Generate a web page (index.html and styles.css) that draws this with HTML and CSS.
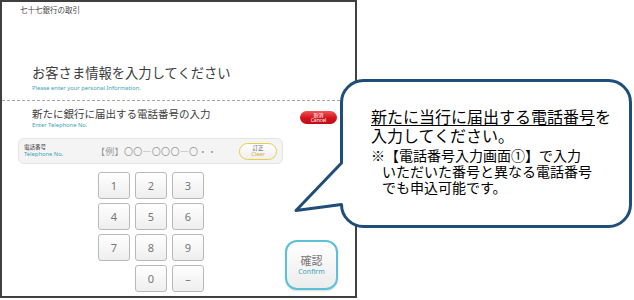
FILE: index.html
```html
<!DOCTYPE html>
<html lang="ja">
<head>
<meta charset="UTF-8">
<meta name="viewport" content="width=device-width, initial-scale=1.0">
<title>お客さま情報の入力</title>
<link rel="stylesheet" href="styles.css">
</head>
<body>
<div class="page">
    <div class="screen">
        <div class="bank-name">七十七銀行の取引</div>
        <div class="title-block">
            <div class="title">お客さま情報を入力してください</div>
            <div class="title-en">Please enter your personal Information.</div>
        </div>
        <div class="section">
            <div class="section-head">
                <div>
                    <div class="heading">新たに銀行に届出する電話番号の入力</div>
                    <div class="heading-en">Enter Telephone No.</div>
                </div>
                <div class="cancel-btn">
                    <span class="btn-jp">取消</span>
                    <span class="btn-en">Cancel</span>
                </div>
            </div>
            <div class="input-bar">
                <div class="input-label">
                    <span class="label-jp">電話番号</span>
                    <span class="label-en">Telephone No.</span>
                </div>
                <div class="input-example">【例】〇〇—〇〇〇—〇・・</div>
                <div class="clear-btn">
                    <span class="btn-jp">訂正</span>
                    <span class="btn-en">Clear</span>
                </div>
            </div>
            <div class="keypad-row">
                <div class="keypad">
                    <div class="key">1</div>
                    <div class="key">2</div>
                    <div class="key">3</div>
                    <div class="key">4</div>
                    <div class="key">5</div>
                    <div class="key">6</div>
                    <div class="key">7</div>
                    <div class="key">8</div>
                    <div class="key">9</div>
                    <div class="key key-empty"></div>
                    <div class="key">0</div>
                    <div class="key">–</div>
                </div>
                <div class="confirm-btn">
                    <span class="confirm-jp">確認</span>
                    <span class="confirm-en">Confirm</span>
                </div>
            </div>
        </div>
    </div>

    <!-- callout over the screen -->
    <div class="bubble">
        <svg class="bubble-shape" width="346" height="152" viewBox="290 78 346 152">
            <path d="M363.5 80.5 H608.5 A22 22 0 0 1 630.5 102.5 V204.5 A22 22 0 0 1 608.5 226.5 H363.5 A22 22 0 0 1 341.5 204.5 L296 210.5 L341.5 163 V102.5 A22 22 0 0 1 363.5 80.5 Z" fill="#fff" stroke="#1f4e79" stroke-width="3" stroke-linejoin="round"/>
        </svg>
        <div class="bubble-text">
            <div class="bubble-main"><u>新たに当行に届出する電話番号</u>を<br>入力してください。</div>
            <div class="bubble-note">※【電話番号入力画面①】で入力</div>
            <div class="bubble-note indent">いただいた番号と異なる電話番号</div>
            <div class="bubble-note indent">でも申込可能です。</div>
        </div>
    </div>
</div>
</body>
</html>
```

FILE: styles.css
```css
body {
    margin: 0;
    background: #fff;
    font-family: "Noto Sans CJK JP", "Noto Sans", sans-serif;
}
.page {
    position: relative;
    width: 634px;
    height: 300px;
    overflow: hidden;
}
.screen {
    width: 353px;
    height: 294px;
    border: 2px solid #404040;
    background: #fff;
    color: #3a3a3a;
}
.bank-name {
    margin: 3px 0 0 18px;
    font-size: 7.5px;
    line-height: 10px;
    color: #444;
}
.title-block {
    margin-top: 50px;
    padding-left: 30px;
    padding-bottom: 8px;
    border-bottom: 1px dashed #a8a8a8;
}
.title {
    font-size: 13.3px;
    line-height: 16px;
    color: #3c3c3c;
}
.title-en, .heading-en, .label-en {
    font-family: "Noto Sans", sans-serif;
    font-size: 5.8px;
    line-height: 8px;
    color: #3ea3b6;
}
.title-en {
    margin-top: 3px;
}
.section {
    padding-top: 6px;
}
.section-head {
    display: flex;
    justify-content: space-between;
    padding: 0 18px 0 30px;
}
.heading {
    font-size: 10.5px;
    line-height: 13px;
    color: #3c3c3c;
}
.heading-en {
    margin-top: 1px;
}
.cancel-btn {
    margin-top: 4px;
    width: 37px;
    height: 13px;
    border-radius: 7px;
    background: linear-gradient(to bottom, #f0555a, #d4121c 55%, #c10d16);
    display: flex;
    flex-direction: column;
    align-items: center;
    justify-content: center;
    color: #fff;
}
.btn-jp, .btn-en {
    font-size: 5px;
    line-height: 5.5px;
}
.btn-en {
    font-family: "Noto Sans", sans-serif;
}
.input-bar {
    margin: 9px 0 0 16px;
    width: 263px;
    height: 24px;
    border: 1px solid #e4e4e4;
    border-radius: 6px;
    background: #f4f4f4;
    display: flex;
    align-items: center;
}
.input-label {
    display: flex;
    flex-direction: column;
    margin-left: 5px;
    width: 72px;
}
.label-jp {
    font-size: 5.5px;
    line-height: 7px;
    color: #333;
}
.label-en {
    line-height: 7px;
}
.input-example {
    font-size: 9px;
    color: #9a9a9a;
    letter-spacing: 0.3px;
    width: 143px;
}
.clear-btn {
    width: 36px;
    height: 15px;
    border: 1.5px solid #e6cf45;
    border-radius: 9px;
    background: linear-gradient(to bottom, #ffffff, #efefef);
    display: flex;
    flex-direction: column;
    align-items: center;
    justify-content: center;
    color: #666;
}
.clear-btn .btn-jp, .clear-btn .btn-en {
    font-size: 5.5px;
    line-height: 6.5px;
}
.clear-btn .btn-en {
    color: #cfae2e;
}
.keypad-row {
    display: flex;
    align-items: flex-end;
    margin-top: 8px;
    padding-left: 96px;
}
.keypad {
    display: grid;
    grid-template-columns: repeat(3, 32px);
    grid-auto-rows: 27px;
    column-gap: 5px;
    row-gap: 4px;
}
.key {
    box-sizing: border-box;
    border: 1.5px solid #b6babc;
    border-radius: 3px;
    background: linear-gradient(to bottom, #ffffff, #eeeeee);
    display: flex;
    align-items: center;
    justify-content: center;
    font-family: "Noto Sans", sans-serif;
    font-size: 11px;
    color: #777;
}
.key-empty {
    visibility: hidden;
}
.confirm-btn {
    box-sizing: border-box;
    margin: 0 0 2px 81px;
    width: 53px;
    height: 50px;
    border: 2.5px solid #5cc0d6;
    border-radius: 12px;
    background: linear-gradient(to bottom, #ffffff, #ececec);
    box-shadow: 0 1px 2px rgba(0, 0, 0, 0.15);
    display: flex;
    flex-direction: column;
    align-items: center;
    justify-content: center;
}
.confirm-jp {
    font-size: 11px;
    line-height: 13px;
    color: #777;
}
.confirm-en {
    font-family: "Noto Sans", sans-serif;
    font-size: 7px;
    line-height: 9px;
    color: #3aa2b8;
}
.bubble {
    position: absolute;
    left: 340px;
    top: 79px;
    width: 292px;
    height: 148px;
}
.bubble-shape {
    position: absolute;
    left: -50px;
    top: -1px;
}
.bubble-text {
    position: relative;
    padding: 28px 0 0 31px;
    color: #000;
}
.bubble-main {
    font-size: 16px;
    line-height: 19px;
}
.bubble-main u {
    text-underline-offset: 2px;
}
.bubble-note {
    font-size: 14px;
    line-height: 16px;
}
.bubble-main + .bubble-note {
    margin-top: 2px;
}
.indent {
    padding-left: 11px;
}
```
